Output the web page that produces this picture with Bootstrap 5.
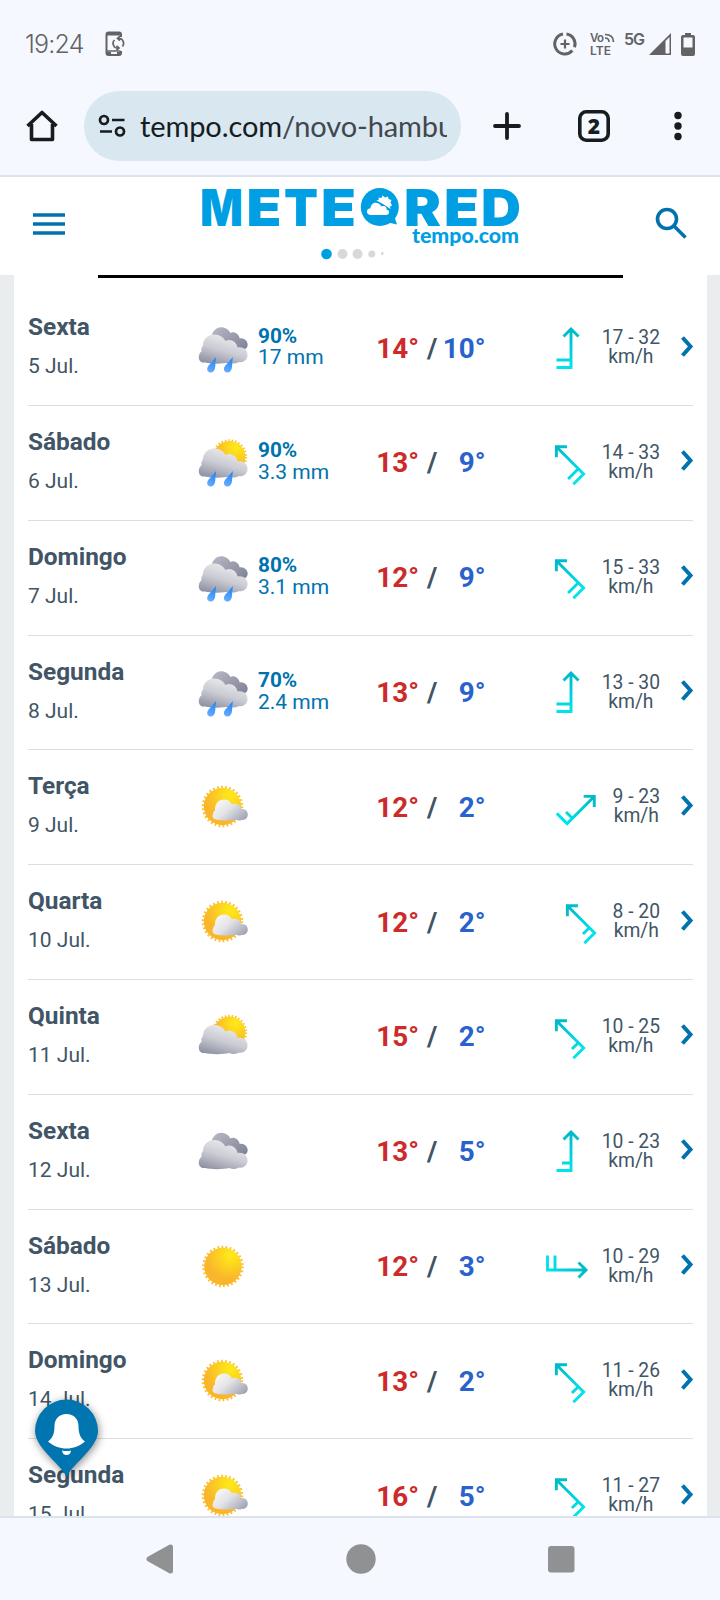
<!DOCTYPE html>
<html lang="pt-BR">
<head>
<meta charset="UTF-8">
<meta name="viewport" content="width=device-width, initial-scale=1.0">
<title>Tempo em Novo Hamburgo</title>
<!-- Bootstrap CSS -->
<link href="https://cdn.jsdelivr.net/npm/bootstrap@5.3.0/dist/css/bootstrap.min.css" rel="stylesheet">
<style>
    body {
        height: 1600px;
        background: #f5f9ff;
        font-family: Roboto, sans-serif;
        color: #415566;
    }
    svg { display: block; flex: none; overflow: visible; }

    /* Phone status bar and browser toolbar */
    .status-bar { height: 88px; padding: 0 22px 0 25px; color: #636365; }
    .status-time { font: 25px/30px Inter, sans-serif; font-weight: 300; letter-spacing: -.8px; width: 80px; }
    .status-net { margin-left: 13px; }
    .url-bar { height: 87px; padding: 3px 26px 15px; color: #171c1f; }
    .url-pill { width: 377px; height: 70px; padding: 0 14px; margin-left: 26px; background: #d9e7f0; }
    .url-text { width: 307px; margin-left: 14px; font: 29px/38px Lato, sans-serif; letter-spacing: -.1px; }
    .url-text span { color: #40484e; }
    .key-plus { margin-left: 32px; }
    .key-tabs { margin-left: 57px; }
    .key-more { margin-left: 64px; }

    /* Site header */
    .site-header { height: 100px; border-top: 2px solid #dce3ec; padding: 0 32px; }
    .header-key { margin-bottom: 5px; }
    .page-area { background: #e9edee; min-height: 0; }
    .forecast { margin: 0 13px 0 14px; padding: 0 14px; }
    .ad-edge { width: 525px; height: 3px; margin: 0 auto 13.2px 70px; background: #000; }

    /* Forecast rows */
    .day-row { height: 114.8px; border-bottom: 1px solid #dbdfe2; }
    .day-name { width: 170px; padding-top: 21px; }
    .day-name strong { display: block; font-size: 24.4px; line-height: 30px; font-weight: 700; }
    .day-name span { display: block; font-size: 21px; line-height: 26px; margin-top: 11px; }
    .day-icon { width: 52px; height: 52px; margin-top: 32.5px; }
    .day-rain { width: 110px; margin-left: 8px; padding-top: 34.5px; font-size: 21px; line-height: 21.5px; color: #0072ae; }
    .day-rain strong { display: block; font-size: 20.8px; font-weight: 700; }
    .day-temp { width: 117.5px; padding-top: 40.5px; font-size: 27.8px; line-height: 34px; font-weight: 700; }
    .temp-max { color: #cd2a2a; width: 51px; text-align: right; }
    .temp-min { color: #2962cc; text-align: right; flex: 1; }
    .wind-icon { width: 42px; height: 42px; margin-top: 35.6px; }
    .wind-text { padding-top: 37px; margin-left: 13.5px; font-size: 19.3px; line-height: 19px; text-align: center; }
    .day-more { margin: 44.5px 0 0 21px; }

    .alert-pin { position: absolute; left: 22px; top: 1388px; filter: drop-shadow(1px 2px 4px rgba(0, 0, 0, .45)); }
    .nav-keys { height: 84px; border-top: 2px solid #dce3ec; padding: 0 145px; }
</style>
</head>
<body class="d-flex flex-column overflow-hidden position-relative">

<!-- Shared drawings -->
<svg width="0" height="0" class="position-absolute">
    <defs>
        <linearGradient id="gCloud" x1="0.15" y1="1" x2="0.65" y2="0">
            <stop offset="0" stop-color="#8b8e9f"/><stop offset="0.5" stop-color="#cbccd4"/><stop offset="1" stop-color="#eeeeef"/>
        </linearGradient>
        <linearGradient id="gDark" x1="0" y1="0" x2="1" y2="0.8">
            <stop offset="0" stop-color="#b9bac5"/><stop offset="1" stop-color="#83869a"/>
        </linearGradient>
        <linearGradient id="gSmall" x1="0.1" y1="0.2" x2="1" y2="0.8">
            <stop offset="0" stop-color="#f6f6f6"/><stop offset="0.4" stop-color="#e4e4e8"/><stop offset="1" stop-color="#a0a4b2"/>
        </linearGradient>
        <radialGradient id="gSun" cx="0.7" cy="0.2" r="0.65">
            <stop offset="0" stop-color="#ffec17"/><stop offset="1" stop-color="#f9b62b"/>
        </radialGradient>
        <linearGradient id="gDrop" x1="0.6" y1="0" x2="0.3" y2="1">
            <stop offset="0" stop-color="#1f86f5"/><stop offset="1" stop-color="#68adff"/>
        </linearGradient>
        <linearGradient id="gWind" gradientUnits="userSpaceOnUse" x1="0" y1="0" x2="0" y2="42">
            <stop offset="0" stop-color="#00b7c6"/><stop offset="1" stop-color="#00e5ec"/>
        </linearGradient>
        <path id="cloudShape" d="M7 38.500C3 39 .5 36.500 .8 32.500C1 30 2 28.500 3.500 27.500C3 24.500 3.500 23 5 21.500C5 15 10 10.500 16.500 10.500C22 10.500 25.500 13.500 27.500 17C32.500 14.500 38.500 17.500 39.500 23.500C45.500 22.500 49.500 26 49.500 31C49.500 36 45 39 41 38C38 39.800 34 40 31.500 38.500C25 40 13 40 7 38.500Z"/>
        <path id="backShape" d="M13.500 12C15 6.500 19 3.300 23 3.300C27.500 3.300 31 6 32.300 9C36 7 41 10 41.700 14.500C46 13.500 49.500 17 49.700 20.500C49.700 24 47 26 44 25L20 20Z"/>
        <g id="drops" fill="url(#gDrop)">
            <path d="M18 33L17.200 43C17 46.500 15 48.500 12.800 48.500C10 48.500 8.500 46 9.500 43.500C10.500 41 15 37 18 33Z"/>
            <path d="M34.800 33L34 43C33.800 46.500 31.800 48.500 29.500 48.500C26.700 48.500 25.200 46 26.200 43.500C27.200 41 31.800 37 34.800 33Z"/>
        </g>
        <g id="sunShape">
            <circle r="19.500" fill="none" stroke="#fbc02d" stroke-width="2.600" stroke-dasharray="1.700 2.384"/>
            <circle r="18.700" fill="url(#gSun)"/>
        </g>
    </defs>
    <symbol id="rain" viewBox="0 0 52 52">
        <use href="#backShape" fill="url(#gDark)"/><use href="#cloudShape" fill="url(#gCloud)"/><use href="#drops"/>
    </symbol>
    <symbol id="sunrain" viewBox="0 0 52 52">
        <use href="#sunShape" transform="translate(31.500 19) scale(.85)"/><use href="#cloudShape" fill="url(#gCloud)"/><use href="#drops"/>
    </symbol>
    <symbol id="suncloud" viewBox="0 -2.500 52 52">
        <use href="#sunShape" transform="translate(31.500 18) scale(.85)"/><use href="#cloudShape" fill="url(#gCloud)"/>
    </symbol>
    <symbol id="clouds" viewBox="0 -2.500 52 52">
        <use href="#backShape" fill="url(#gDark)"/><use href="#cloudShape" fill="url(#gCloud)"/>
    </symbol>
    <symbol id="sun" viewBox="0 -.5 52 52"><use href="#sunShape" transform="translate(25 24)"/></symbol>
    <symbol id="partly" viewBox="0 -1 52 52">
        <use href="#sunShape" transform="translate(24.500 22.500)"/>
        <path fill="url(#gSmall)" d="M18 35.500C15 35 13.800 32.500 15 30C15 28.500 15.800 27 17 26.500C16.500 20 20.500 15.500 26 15.500C30 15.500 32.500 17.500 33.800 20.300C38 18.500 42.500 21 43.500 25C47.500 24.500 50 27.500 49.800 31C49.500 34.500 46.500 36.500 44 35.700C42 36.800 39.500 36.800 38 35.800C31 37 22 36.500 18 35.500Z"/>
    </symbol>
    <!-- Wind barbs, pointing north -->
    <g id="barb2" fill="none" stroke="url(#gWind)" stroke-width="2.900">
        <path d="M25.010 2V40.500H10.500M25 33H10.500M17.500 9.500L25 2L32.500 9.500"/>
    </g>
    <g id="barb1" fill="none" stroke="url(#gWind)" stroke-width="2.900">
        <path d="M25.010 2V40.500H10.500M25 33H16M17.500 9.500L25 2L32.500 9.500"/>
    </g>
</svg>

<!-- Status bar -->
<div class="status-bar d-flex align-items-center flex-shrink-0">
    <div class="status-time">19:24</div>
    <svg width="20" height="26" viewBox="0 0 20 26" fill="none" stroke="currentColor">
        <path d="M16 6V3.500Q16 1.500 14 1.500H3.500Q1.500 1.500 1.500 3.500V22Q1.500 24 3.500 24H14Q16 24 16 22V20" stroke-width="2"/>
        <path d="M2 3H15M2 22.500H6M12 22.500H15" stroke-width="3"/><path d="M2 20H15.500" stroke-width="1.500"/>
        <path d="M9.500 9Q6.500 12 9.500 16Q11 17.500 14 17M11.500 14.800L14 17L11.500 19M17.500 15.500Q20 12 17 8.500Q15 7 12.500 7.500M15 5L12.500 7.500L15 9.500" stroke-width="1.700"/>
    </svg>
    <svg class="ms-auto" width="24" height="24" viewBox="0 0 24 24" fill="none" stroke="currentColor">
        <path d="M13.500 2A10 10 0 0 1 21.500 15.200M19.300 18.500A10 10 0 1 1 10 2.100" stroke-width="3"/>
        <path d="M12 7.500V16.500M7.500 12H16.500" stroke-width="2.200"/>
    </svg>
    <svg class="status-net" width="26" height="24" viewBox="0 0 26 24" fill="currentColor" font-family="Inter" font-weight="600">
        <text x="0" y="10" font-size="11.500" textLength="14">Vo</text>
        <text x="0" y="23" font-size="12" textLength="21">LTE</text>
        <path d="M15 6Q19 6 19 10M15 2.500Q23.500 2.500 23.500 10" fill="none" stroke="currentColor" stroke-width="1.700"/>
    </svg>
    <svg class="ms-2" width="74" height="26" viewBox="0 0 74 26" fill="currentColor">
        <text x="0" y="13.500" font-family="Inter" font-weight="600" font-size="16" textLength="21">5G</text>
        <path d="M25 24L47 2V24Z"/><path d="M41.500 10L45.500 6V22.500H41.500Z" fill="#f5f9ff"/>
        <path d="M61 2H67V4H69Q71 4 71 6V23Q71 25 69 25H59Q57 25 57 23V6Q57 4 59 4H61ZM59.500 6.500V16.500H68.500V6.500Z" fill-rule="evenodd"/>
    </svg>
</div>

<!-- Browser toolbar -->
<div class="url-bar d-flex align-items-center flex-shrink-0">
    <svg width="32" height="32" viewBox="0 0 32 32" fill="none" stroke="currentColor" stroke-width="3.600" stroke-linejoin="round">
        <path d="M1.500 16L16 2.500L30.500 16M5.500 14V29.500H26.500V14"/>
    </svg>
    <div class="url-pill rounded-pill d-flex align-items-center flex-shrink-0">
        <svg width="28" height="24" viewBox="0 0 28 24" fill="none" stroke="currentColor" stroke-width="2.700">
            <circle cx="6" cy="6" r="4"/><path d="M14 6H26.500M2 17.500H14"/><circle cx="22" cy="17.500" r="4"/>
        </svg>
        <div class="url-text text-nowrap overflow-hidden">tempo.com<span>/novo-hamburgo</span></div>
    </div>
    <svg class="key-plus" width="28" height="28" viewBox="0 0 28 28" stroke="currentColor" stroke-width="3.800" stroke-linecap="round">
        <path d="M14 2V26M2 14H26"/>
    </svg>
    <svg class="key-tabs" width="32" height="32" viewBox="0 0 32 32">
        <rect x="1.800" y="1.800" width="28.400" height="28.400" rx="6.500" fill="none" stroke="currentColor" stroke-width="3.600"/>
        <text x="16" y="23.500" text-anchor="middle" font-family="Open Sans" font-weight="800" font-size="21" fill="currentColor">2</text>
    </svg>
    <svg class="key-more" width="8" height="30" viewBox="0 0 8 30" fill="currentColor">
        <circle cx="4" cy="4.500" r="3.700"/><circle cx="4" cy="15" r="3.700"/><circle cx="4" cy="25.500" r="3.700"/>
    </svg>
</div>

<!-- Site header -->
<header class="site-header bg-white d-flex justify-content-between align-items-center flex-shrink-0">
    <svg class="header-key" width="33" height="24" viewBox="0 0 33 24" stroke="#0072ae" stroke-width="3.600"><path d="M1 3H33M1 12H33M1 21H33"/></svg>
    <svg width="330" height="98" viewBox="195 177 330 98" fill="#009fe3" font-family="Inter" font-weight="900">
        <g font-size="51">
            <text x="200" y="226" textLength="43" lengthAdjust="spacingAndGlyphs">M</text>
            <text x="246.500" y="226" textLength="35" lengthAdjust="spacingAndGlyphs">E</text>
            <text x="284" y="226" textLength="34" lengthAdjust="spacingAndGlyphs">T</text>
            <text x="321" y="226" textLength="35" lengthAdjust="spacingAndGlyphs">E</text>
            <text x="404" y="226" textLength="37" lengthAdjust="spacingAndGlyphs">R</text>
            <text x="444" y="226" textLength="35" lengthAdjust="spacingAndGlyphs">E</text>
            <text x="481" y="226" textLength="40" lengthAdjust="spacingAndGlyphs">D</text>
        </g>
        <circle cx="379.800" cy="207" r="19"/><path d="M386 222L397 224.500L393.500 214Z"/>
        <path fill="#fff" d="M370.500 215C365.500 214.500 366 208.500 370.500 208.300C371 202 378 200.500 381.500 206.500C385 205 387 207.500 386.500 209.500C390.500 210.500 389.500 215 386 215Z"/>
        <path fill="#fff" d="M376.500 200.500L379 199.500L378.500 197.500L381.500 198L382.500 195.500L385 197.500L388 196.500L388.500 199L391.500 200L390.500 202.500L392 205.500L390 206.500L390.500 209L383 204Z"/>
        <text x="412" y="243" font-family="Lato" font-size="20" font-weight="900" textLength="107" lengthAdjust="spacingAndGlyphs">tempo.com</text>
        <circle cx="326.500" cy="254" r="5.300"/>
        <g fill="#d8d8d8"><circle cx="342.500" cy="254" r="5"/><circle cx="357.500" cy="254" r="5"/><circle cx="371.800" cy="254" r="3.500"/><circle cx="382.300" cy="253.500" r="1.400"/></g>
    </svg>
    <svg class="header-key" width="33" height="33" viewBox="0 0 33 33" fill="none" stroke="#0072ae" stroke-width="3.600"><circle cx="12" cy="12" r="9.500"/><path d="M19 19L30.500 30.500"/></svg>
</header>

<!-- Forecast list -->
<main class="page-area flex-fill overflow-hidden">
    <div class="forecast bg-white">
        <div class="ad-edge"></div>
        <div id="days"></div>
    </div>
</main>

<!-- Weather alert pin -->
<svg class="alert-pin" width="90" height="100" viewBox="0 0 90 100">
    <path fill="#0075b0" d="M44.500 89C40 79 28 71 18 57Q13 49 13 43A31.500 31.500 0 1 1 76 43Q76 49 71 57C61 71 49 79 44.500 89Z"/>
    <path fill="#fff" d="M44.500 26C52 26 56.500 31 56.500 38C56.500 46 58.500 50 63 53.500C58 58 51 60.500 44.500 60.500C38 60.500 31 58 26 53.500C30.500 50 32.500 46 32.500 38C32.500 31 37 26 44.500 26ZM40 62.500Q44.500 63.500 49 62.500Q48.500 67 44.500 67Q40.500 67 40 62.500Z"/>
</svg>

<!-- Navigation keys -->
<footer class="nav-keys d-flex justify-content-between align-items-center flex-shrink-0">
    <svg width="29" height="30" viewBox="0 0 29 30" fill="#909193" stroke="#909193" stroke-width="5" stroke-linejoin="round"><path d="M4 15L25.500 3V27Z"/></svg>
    <svg width="30" height="30" viewBox="0 0 30 30" fill="#909193"><circle cx="15" cy="15" r="14.700"/></svg>
    <svg width="28" height="28" viewBox="0 0 28 28" fill="#909193"><rect x="1" y="1" width="26.500" height="26.500" rx="3"/></svg>
</footer>

<script src="https://cdn.jsdelivr.net/npm/bootstrap@5.3.0/dist/js/bootstrap.bundle.min.js"></script>
<script>
    // day, date, icon, rain %, rain mm, max, min, barb, wind angle, wind speed
    const days = [
        ['Sexta', '5 Jul.', 'rain', '90%', '17 mm', 14, 10, 'barb2', 0, '17 - 32'],
        ['Sábado', '6 Jul.', 'sunrain', '90%', '3.3 mm', 13, 9, 'barb2', -45, '14 - 33'],
        ['Domingo', '7 Jul.', 'rain', '80%', '3.1 mm', 12, 9, 'barb2', -45, '15 - 33'],
        ['Segunda', '8 Jul.', 'rain', '70%', '2.4 mm', 13, 9, 'barb2', 0, '13 - 30'],
        ['Terça', '9 Jul.', 'partly', '', '', 12, 2, 'barb1', 45, '9 - 23'],
        ['Quarta', '10 Jul.', 'partly', '', '', 12, 2, 'barb1', -45, '8 - 20'],
        ['Quinta', '11 Jul.', 'suncloud', '', '', 15, 2, 'barb1', -45, '10 - 25'],
        ['Sexta', '12 Jul.', 'clouds', '', '', 13, 5, 'barb1', 0, '10 - 23'],
        ['Sábado', '13 Jul.', 'sun', '', '', 12, 3, 'barb2', 90, '10 - 29'],
        ['Domingo', '14 Jul.', 'partly', '', '', 13, 2, 'barb1', -45, '11 - 26'],
        ['Segunda', '15 Jul.', 'partly', '', '', 16, 5, 'barb1', -45, '11 - 27']
    ];

    document.getElementById('days').innerHTML = days.map(d => `
        <div class="day-row d-flex align-items-start">
            <div class="day-name"><strong>${d[0]}</strong><span>${d[1]}</span></div>
            <svg class="day-icon"><use href="#${d[2]}"/></svg>
            <div class="day-rain"><strong>${d[3]}</strong>${d[4]}</div>
            <div class="day-temp d-flex">
                <span class="temp-max">${d[5]}°</span><span class="ms-2">/</span><span class="temp-min">${d[6]}°</span>
            </div>
            <svg class="wind-icon ms-auto" viewBox="0 0 42 42"><use href="#${d[7]}" transform="rotate(${d[8]} 21 21)"/></svg>
            <div class="wind-text">${d[9]}<br>km/h</div>
            <svg class="day-more" width="12" height="21" viewBox="0 0 12 21" fill="none" stroke="#0072ae" stroke-width="4"><path d="M1.500 1.500L9.500 10.500L1.500 19.500"/></svg>
        </div>`).join('');
</script>
</body>
</html>
